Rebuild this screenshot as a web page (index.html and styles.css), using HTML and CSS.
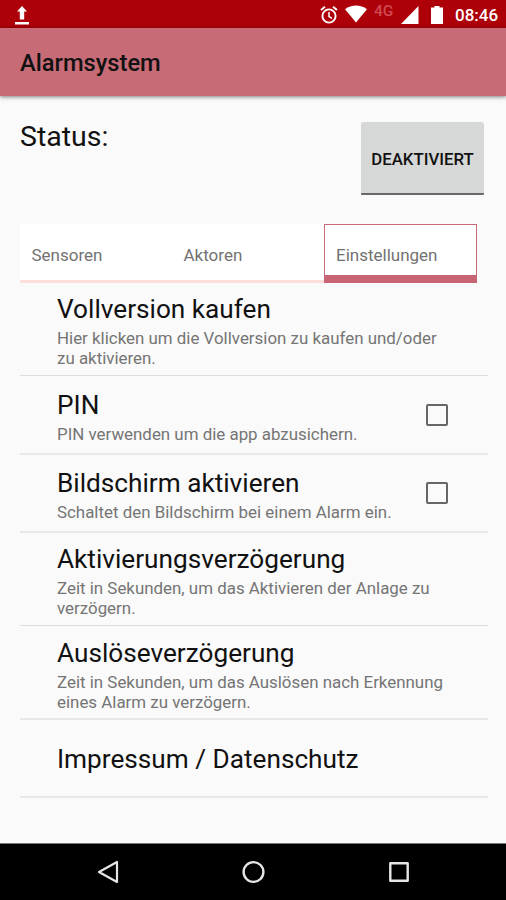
FILE: index.html
```html
<!DOCTYPE html>
<html lang="de">
  <head>
    <meta charset="UTF-8" />
    <meta name="viewport" content="width=device-width, initial-scale=1.0" />
    <title>Alarmsystem</title>
    <link rel="stylesheet" href="styles.css">
  </head>
  <body>
    <!-- system status bar -->
    <div class="statusbar">
      <svg class="icon-upload" width="16" height="21" viewBox="0 0 16 21" fill="#fff">
        <path d="M8 1l5 5.500h-2.800V14.500H5.800V6.500H3z M1 17h14v2.600H1z" />
      </svg>
      <div class="statusbar-right">
        <svg class="icon-alarm" width="18" height="20" viewBox="0 0 18 20" fill="none" stroke="#fff">
          <circle cx="9" cy="11" r="6.600" stroke-width="1.900" />
          <path d="M9 7v4.500l3 1.900" stroke-width="1.500" />
          <path d="M1 5l4-3.300M17 5l-4-3.300" stroke-width="1.900" />
        </svg>
        <svg class="icon-wifi" width="22" height="18" viewBox="0 0 22 18" fill="#fff">
          <path d="M11 17.500L0 4.300C6.500-.7 15.500-.7 22 4.300z" />
        </svg>
        <span class="network">4G</span>
        <svg class="icon-signal" width="18" height="18" viewBox="0 0 18 18" fill="#fff">
          <path d="M17.500 0v18H0z" />
        </svg>
        <svg class="icon-battery" width="12" height="18" viewBox="0 0 12 18" fill="#fff">
          <path d="M3.500 0h5v1.500H12V18H0V1.500h3.500z" />
        </svg>
        <span class="clock">08:46</span>
      </div>
    </div>

    <header class="appbar">
      <h1>Alarmsystem</h1>
    </header>

    <main class="content">
      <div class="status">
        <span class="status-label">Status:</span>
        <button class="status-button">DEAKTIVIERT</button>
      </div>

      <nav class="tabs">
        <div class="tab">Sensoren</div>
        <div class="tab">Aktoren</div>
        <div class="tab tab-active">Einstellungen</div>
      </nav>

      <ul class="settings">
        <li class="row row-tall">
          <div class="row-text">
            <h2>Vollversion kaufen</h2>
            <p>Hier klicken um die Vollversion zu kaufen und/oder<br />zu aktivieren.</p>
          </div>
        </li>
        <li class="row row-check">
          <div class="row-text">
            <h2>PIN</h2>
            <p>PIN verwenden um die app abzusichern.</p>
          </div>
          <span class="checkbox"></span>
        </li>
        <li class="row row-check">
          <div class="row-text">
            <h2>Bildschirm aktivieren</h2>
            <p>Schaltet den Bildschirm bei einem Alarm ein.</p>
          </div>
          <span class="checkbox"></span>
        </li>
        <li class="row row-tall">
          <div class="row-text">
            <h2>Aktivierungsverzögerung</h2>
            <p>Zeit in Sekunden, um das Aktivieren der Anlage zu<br />verzögern.</p>
          </div>
        </li>
        <li class="row row-tall">
          <div class="row-text">
            <h2>Auslöseverzögerung</h2>
            <p>Zeit in Sekunden, um das Auslösen nach Erkennung<br />eines Alarm zu verzögern.</p>
          </div>
        </li>
        <li class="row row-single">
          <div class="row-text">
            <h2>Impressum / Datenschutz</h2>
          </div>
        </li>
      </ul>
    </main>

    <!-- back, home, recent apps -->
    <footer class="navbar">
      <svg width="24" height="24" viewBox="0 0 24 24" fill="none" stroke="#e6e6e6" stroke-width="2.200" stroke-linejoin="round">
        <path d="M21 2v20L3 12z" />
      </svg>
      <svg width="24" height="24" viewBox="0 0 24 24" fill="none" stroke="#e6e6e6" stroke-width="2.400">
        <circle cx="12.500" cy="12" r="9.900" />
      </svg>
      <svg width="24" height="24" viewBox="0 0 24 24" fill="none" stroke="#e6e6e6" stroke-width="2.400" stroke-linejoin="round">
        <path d="M3.300 3.300h17.400v17.400H3.300z" />
      </svg>
    </footer>
  </body>
</html>
```

FILE: styles.css
```css
* {
  box-sizing: border-box;
}
body {
  margin: 0;
  height: 900px;
  display: flex;
  flex-direction: column;
  overflow: hidden;
  background-color: #fafafa;
  font-family: Roboto, "Liberation Sans", sans-serif;
  color: #111;
}
h1,
h2,
p,
ul {
  margin: 0;
  padding: 0;
  font-weight: 400;
}
svg {
  display: block;
  flex: none;
}

/* status bar */
.statusbar {
  height: 28px;
  flex: none;
  display: flex;
  justify-content: space-between;
  padding: 5px 8px 0 14px;
  background-color: #ad0009;
  color: #fff;
}
.statusbar-right {
  display: flex;
}
.icon-alarm {
  margin-right: 7px;
}
.icon-wifi {
  margin-right: 7px;
}
.network {
  width: 21px;
  margin-right: 6px;
  margin-top: -2px;
  font-size: 15.5px;
  line-height: 16px;
  font-weight: 500;
  color: #d04a52;
}
.icon-signal {
  margin-top: 1px;
  margin-right: 12px;
}
.icon-battery {
  margin-top: 1px;
  margin-right: 12px;
}
.clock {
  width: 43px;
  font-size: 17px;
  line-height: 21px;
  font-weight: 500;
}

/* app bar */
.appbar {
  height: 68px;
  flex: none;
  display: flex;
  align-items: center;
  padding: 2px 20px 0;
  background-color: #c76b77;
  box-shadow: 0 1px 4px rgba(0, 0, 0, 0.5);
}
.appbar h1 {
  font-size: 23.7px;
  line-height: 28px;
  font-weight: 500;
}

.content {
  flex: 1;
  padding: 26px 18px 0 20px;
}
.status {
  height: 102px;
  display: flex;
  justify-content: space-between;
  align-items: flex-start;
  padding-right: 4px;
}
.status-label {
  font-size: 28.5px;
  line-height: 29px;
}
.status-button {
  width: 123px;
  height: 73px;
  padding: 2px 0 0;
  border: 0;
  border-bottom: 2px solid #67696a;
  border-radius: 3px 3px 1px 1px;
  background-color: #d6d8d7;
  color: #111;
  font-family: inherit;
  font-size: 16.8px;
  font-weight: 500;
  white-space: nowrap;
}

/* tabs */
.tabs {
  display: grid;
  grid-template-columns: 152px 152px 153px;
  width: 457px;
  height: 59px;
  background-color: #fff;
}
.tab {
  padding: 21px 11px 0 11.5px;
  font-size: 17px;
  line-height: 20px;
  color: #727272;
  border-bottom: 3px solid #fde0de;
}
.tab-active {
  padding: 20px 11px 0;
  border: 1px solid #c76b77;
  border-bottom: 8px solid #c76575;
}

/* settings list */
.settings {
  list-style: none;
}
.row {
  display: flex;
  padding-left: 37px;
  border-bottom: 2px solid #e8e8e8;
}
.row-tall {
  height: 93px;
  padding-top: 10px;
  border-bottom: 1px solid #dedede;
}
.row-tall + .row-tall {
  height: 94px;
  padding-top: 11px;
  border-bottom: 2px solid #e8e8e8;
}
.row-check {
  height: 78px;
  padding-top: 12px;
}
.row-tall + .row-check {
  height: 79px;
  padding-top: 13px;
}
.row-single {
  height: 78px;
  align-items: center;
  padding-top: 1px;
}
.row-text {
  flex: 1;
}
.row h2 {
  font-size: 26.2px;
  line-height: 32px;
}
.row p {
  margin-top: 3px;
  font-size: 16.9px;
  line-height: 20px;
  color: #757575;
  white-space: nowrap;
}
.checkbox {
  width: 22px;
  height: 22px;
  margin: 15px 40px 0 0;
  border: 2px solid #666;
  border-radius: 2px;
}

/* navigation bar */
.navbar {
  height: 57px;
  flex: none;
  display: flex;
  justify-content: center;
  align-items: center;
  gap: 121.5px;
  border-top: 1px solid #777;
  background-color: #000;
}
```
